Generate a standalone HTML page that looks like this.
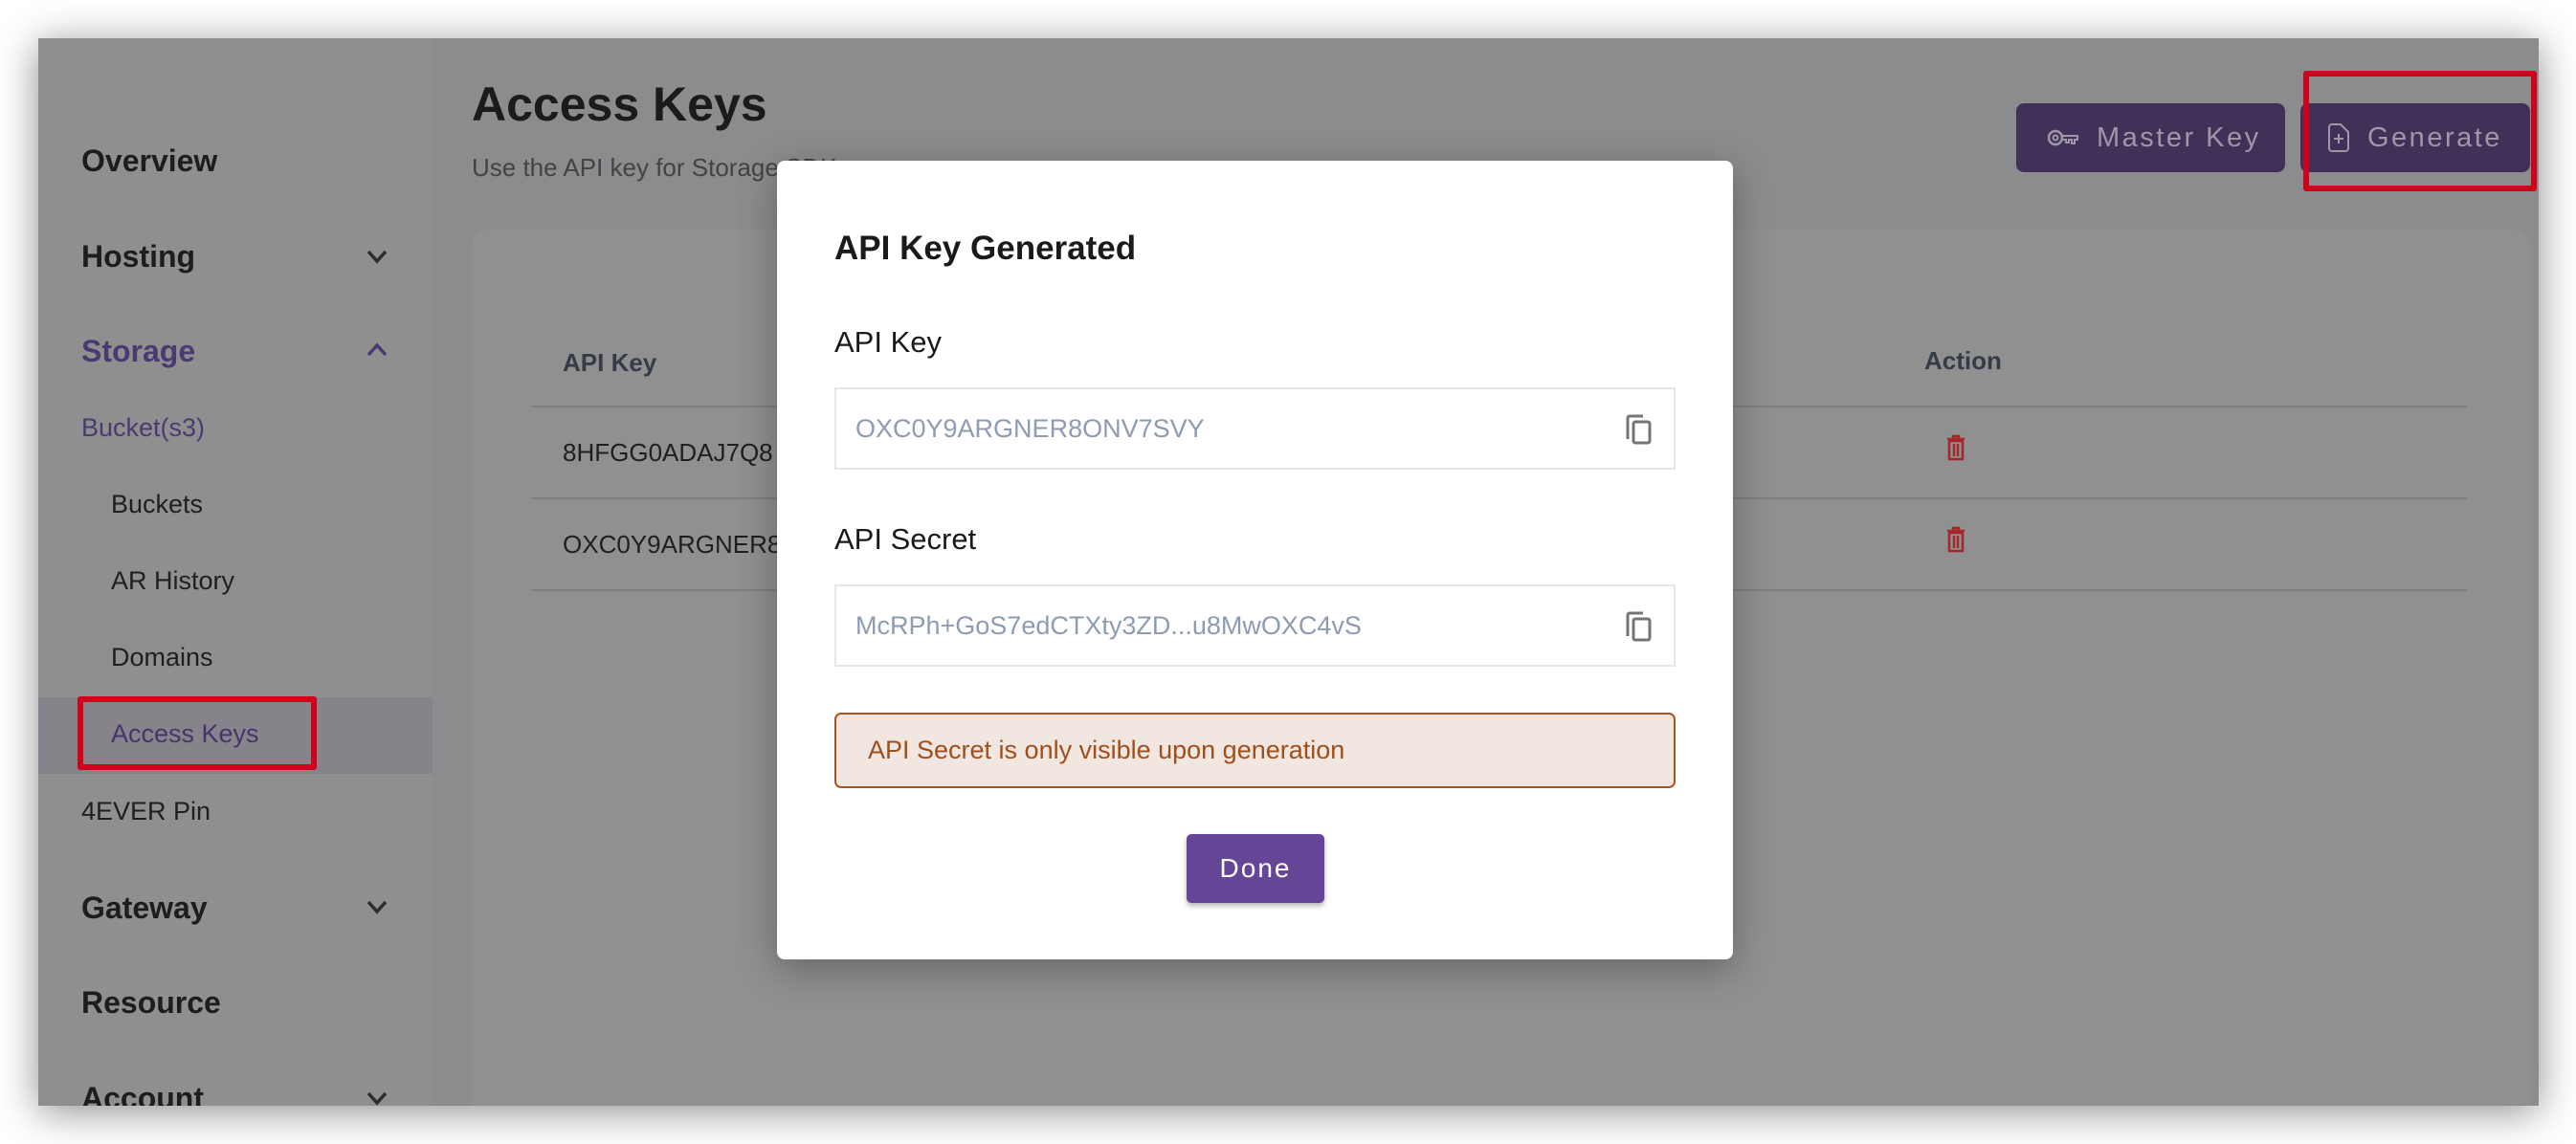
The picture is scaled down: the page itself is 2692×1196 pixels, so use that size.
<!DOCTYPE html>
<html><head><meta charset="utf-8"><style>
*{margin:0;padding:0;box-sizing:border-box}
body{width:2692px;height:1196px;background:#fff;position:relative;overflow:hidden;font-family:"Liberation Sans",Arial,sans-serif}
.frame{position:absolute;left:40px;top:40px;width:2613px;height:1116px;background:#8b8c8e;box-shadow:0 6px 40px rgba(0,0,0,.45);overflow:hidden}
.side{position:absolute;left:0;top:0;width:412px;height:100%;background:#8f8f8f}
.a{position:absolute;left:0;white-space:nowrap;line-height:1}
.nav{left:45px;font-weight:bold;font-size:32px;color:#1d1d1f}
.sub{font-size:27px;color:#1f1f21}
.chev{position:absolute;left:340px;width:28px;height:28px}
.card{position:absolute;left:453px;top:200px;width:2151px;height:1000px;background:#909090;border-radius:18px}
.btn{position:absolute;top:68px;height:72px;background:#413159;border-radius:8px;color:#9d97a6;font-size:29px;letter-spacing:2.5px;display:flex;align-items:center}
.line{position:absolute;left:516px;width:2023px;height:2px;background:#7d7e80}
.modal{position:absolute;left:812px;top:168px;width:999px;height:835px;background:#fff;border-radius:8px;box-shadow:0 10px 40px rgba(0,0,0,.3)}
.inp{position:absolute;left:60px;width:879px;height:86px;border:2px solid #e3e6eb;color:#8d9bb3;font-size:27px;padding-left:20px;line-height:82px}
.copy{position:absolute;right:22px;top:26px}
</style></head><body>
<div class="frame">
 <div class="side">
  <div class="a nav" style="top:112px">Overview</div>
  <div class="a nav" style="top:212px">Hosting</div>
  <svg class="chev" style="top:214px" viewBox="0 0 28 28"><path d="M5 9l9 10 9-10" stroke="#2e2e30" stroke-width="3.5" fill="none"/></svg>
  <div class="a nav" style="top:311px;color:#4b3a72">Storage</div>
  <svg class="chev" style="top:312px" viewBox="0 0 28 28"><path d="M5 19l9-10 9 10" stroke="#4b3a72" stroke-width="3.5" fill="none"/></svg>
  <div class="a sub" style="left:45px;top:394px;color:#4b3a72">Bucket(s3)</div>
  <div class="a sub" style="left:76px;top:474px">Buckets</div>
  <div class="a sub" style="left:76px;top:554px">AR History</div>
  <div class="a sub" style="left:76px;top:634px">Domains</div>
  <div style="position:absolute;left:0;top:689px;width:412px;height:80px;background:#86838a"></div>
  <div class="a sub" style="left:76px;top:714px;color:#45366a">Access Keys</div>
  <div style="position:absolute;left:41px;top:688px;width:250px;height:77px;border:6px solid #d0021b;border-radius:3px"></div>
  <div class="a sub" style="left:45px;top:795px">4EVER Pin</div>
  <div class="a nav" style="top:893px">Gateway</div>
  <svg class="chev" style="top:894px" viewBox="0 0 28 28"><path d="M5 9l9 10 9-10" stroke="#2e2e30" stroke-width="3.5" fill="none"/></svg>
  <div class="a nav" style="top:992px">Resource</div>
  <div class="a nav" style="top:1092px">Account</div>
  <svg class="chev" style="top:1094px" viewBox="0 0 28 28"><path d="M5 9l9 10 9-10" stroke="#2e2e30" stroke-width="3.5" fill="none"/></svg>
 </div>
 <div class="a" style="left:453px;top:44px;font-size:50px;font-weight:bold;color:#1b1b1d">Access Keys</div>
 <div class="a" style="left:453px;top:122px;font-size:26px;color:#434346">Use the API key for Storage SDK</div>
 <div class="btn" style="left:2067px;width:281px;padding-left:32px">
  <svg width="34" height="20" viewBox="0 0 34 20" style="margin-right:18px"><circle cx="9" cy="10" r="7" stroke="#9d97a6" stroke-width="2.5" fill="none"/><circle cx="9" cy="10" r="2.5" stroke="#9d97a6" stroke-width="2" fill="none"/><path d="M16 8h16v4h-3v4h-3v-4h-3v3h-3v-3h-4" stroke="#9d97a6" stroke-width="2" fill="none"/></svg>Master Key</div>
 <div class="btn" style="left:2364px;width:240px;padding-left:28px">
  <svg width="24" height="32" viewBox="0 0 24 32" style="margin-right:18px"><path d="M5 2h9l8 8v17a3 3 0 0 1-3 3H5a3 3 0 0 1-3-3V5a3 3 0 0 1 3-3z" stroke="#9d97a6" stroke-width="2" fill="none"/><path d="M12 12v10M7 17h10" stroke="#9d97a6" stroke-width="2"/></svg>Generate</div>
 <div style="position:absolute;left:2367px;top:34px;width:244px;height:126px;border:6px solid #d0021b;border-radius:3px"></div>
 <div class="card"></div>
 <div class="a" style="left:548px;top:326px;font-size:26px;font-weight:bold;color:#353b47">API Key</div>
 <div class="a" style="left:1971px;top:324px;font-size:26px;font-weight:bold;color:#353b47">Action</div>
 <div class="line" style="top:384px"></div>
 <div class="line" style="top:480px"></div>
 <div class="line" style="top:576px"></div>
 <div class="a" style="left:548px;top:420px;font-size:26px;color:#1f1f21">8HFGG0ADAJ7Q8</div>
 <div class="a" style="left:548px;top:516px;font-size:26px;color:#1f1f21">OXC0Y9ARGNER8</div>
 <svg style="position:absolute;left:1994px;top:414px" width="20" height="28" viewBox="0 0 20 28"><path d="M1 5h18M7 5V2h6v3M3 7h14v19H3z M8 10v13M12 10v13" stroke="#a4262c" stroke-width="2.5" fill="none"/></svg>
 <svg style="position:absolute;left:1994px;top:510px" width="20" height="28" viewBox="0 0 20 28"><path d="M1 5h18M7 5V2h6v3M3 7h14v19H3z M8 10v13M12 10v13" stroke="#a4262c" stroke-width="2.5" fill="none"/></svg>
</div>
<div class="modal">
 <div class="a" style="left:60px;top:74px;font-size:35px;font-weight:bold;color:#1a1a1c">API Key Generated</div>
 <div class="a" style="left:60px;top:174px;font-size:31px;color:#1a1a1c">API Key</div>
 <div class="inp" style="top:237px">OXC0Y9ARGNER8ONV7SVY
  <svg class="copy" width="28" height="32" viewBox="0 0 28 32"><path d="M2 26V4a2 2 0 0 1 2-2h14" stroke="#757575" stroke-width="3" fill="none"/><rect x="8" y="8" width="17" height="22" rx="2" stroke="#757575" stroke-width="3" fill="none"/></svg></div>
 <div class="a" style="left:60px;top:380px;font-size:31px;color:#1a1a1c">API Secret</div>
 <div class="inp" style="top:443px">McRPh+GoS7edCTXty3ZD...u8MwOXC4vS
  <svg class="copy" width="28" height="32" viewBox="0 0 28 32"><path d="M2 26V4a2 2 0 0 1 2-2h14" stroke="#757575" stroke-width="3" fill="none"/><rect x="8" y="8" width="17" height="22" rx="2" stroke="#757575" stroke-width="3" fill="none"/></svg></div>
 <div style="position:absolute;left:60px;top:577px;width:879px;height:79px;background:#f2e6e1;border:2px solid #a8541e;border-radius:7px;color:#a04f1a;font-size:27px;line-height:75px;padding-left:33px">API Secret is only visible upon generation</div>
 <div style="position:absolute;left:428px;top:704px;width:144px;height:72px;background:#644596;border-radius:5px;color:#fff;font-size:28px;letter-spacing:2px;text-align:center;line-height:72px;box-shadow:0 3px 6px rgba(0,0,0,.3)">Done</div>
</div>
</body></html>
